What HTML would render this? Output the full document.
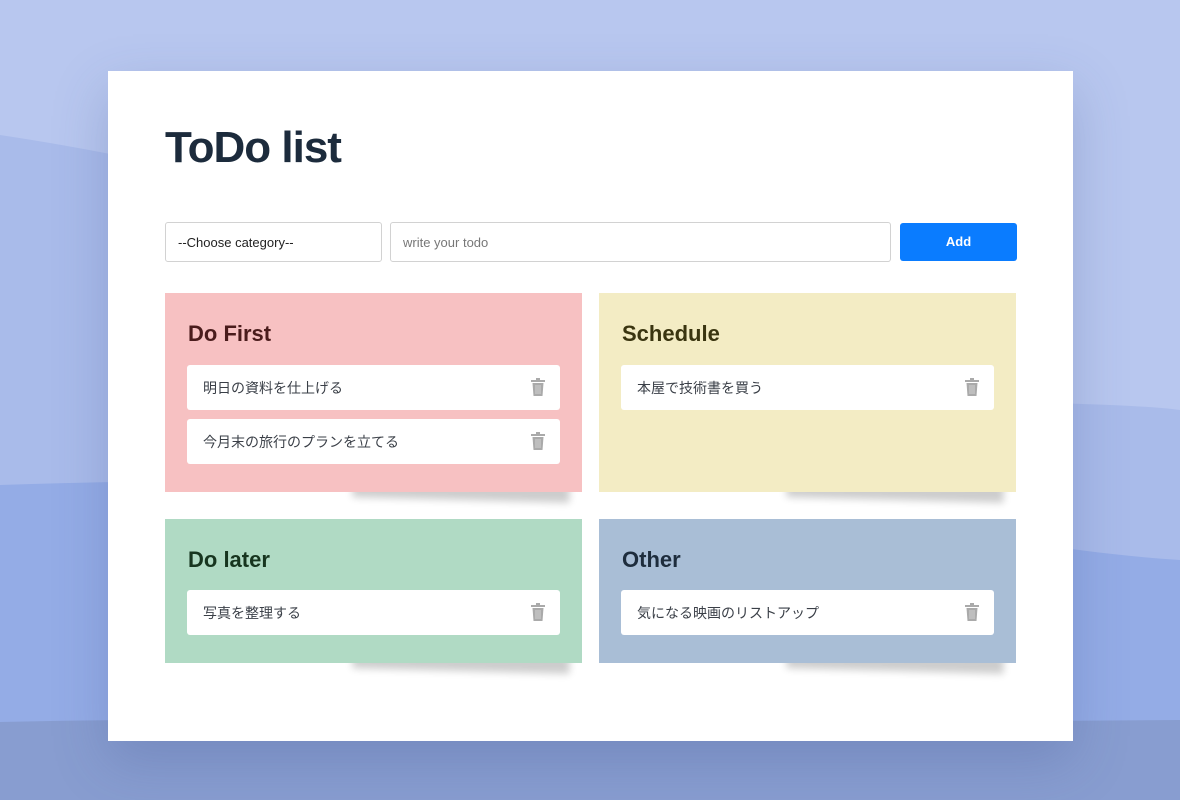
<!DOCTYPE html><html><head><style>
*{box-sizing:border-box;margin:0;padding:0}
body{width:1180px;height:800px;position:relative;overflow:hidden;font-family:"Liberation Sans","Noto Sans CJK JP",sans-serif;background:#b8c7ef}
.bg{position:absolute;left:0;top:0}
.card{position:absolute;left:108px;top:71px;width:965px;height:670px;background:#fff;box-shadow:0 20px 50px rgba(60,80,140,.25);z-index:0}
h1{position:absolute;left:57px;top:52px;font-size:44px;font-weight:bold;color:#1c2b3c;letter-spacing:-1px}
.sel,.inp{position:absolute;top:151px;height:40px;border:1px solid #d2d2d2;border-radius:3px;font-size:13px;padding:12px 12px;color:#222}
.sel{left:57px;width:217px}
.inp{left:282px;width:501px;color:#777}
.btn{position:absolute;left:792px;top:152px;width:117px;height:38px;background:#0a7cff;border-radius:3px;color:#fff;font-weight:bold;font-size:13px;text-align:center;line-height:38px}
.q{position:absolute;width:417px}
.q::after{content:"";position:absolute;z-index:-1;left:45%;right:12px;bottom:4px;height:20px;box-shadow:0 12px 8px rgba(0,0,0,.2);transform:rotate(1.5deg);background:#ccc}
.q h2{position:absolute;left:23px;top:28px;font-size:22px;font-weight:bold}
.it{position:absolute;left:22px;width:373px;height:45px;background:#fff;border-radius:3px;font-size:14px;color:#3a3f47;padding:13px 16px}
.it svg{position:absolute;right:15px;top:13px}
</style></head><body>
<svg class="bg" width="1180" height="800"><path d="M0 135 C300 180 700 300 900 380 C1000 410 1100 400 1180 410 L1180 800 L0 800Z" fill="#a9bbea"/><path d="M0 485 C300 475 600 480 900 520 C1000 540 1100 555 1180 560 L1180 800 L0 800Z" fill="#94ace6"/><path d="M0 722 C300 715 600 725 1180 720 L1180 800 L0 800Z" fill="#889dd0"/></svg>
<div class="card">
<h1>ToDo list</h1>
<div class="sel">--Choose category--</div>
<div class="inp">write your todo</div>
<div class="btn">Add</div>
<div class="q" style="left:57px;top:222px;height:199px;background:#f7c1c2"><h2 style="color:#4a1c1c">Do First</h2>
<div class="it" style="top:72px">明日の資料を仕上げる<svg width="14" height="18" viewBox="0 0 14 18"><rect x="0" y="2" width="14" height="2" fill="#aaa"/><rect x="5" y="0" width="4" height="3" fill="#aaa"/><path d="M1.5 5h11l-1 13h-9z" fill="#aaa"/><path d="M5 7v9M7 7v9M9 7v9" stroke="#ddd" stroke-width=".8"/></svg></div>
<div class="it" style="top:126px">今月末の旅行のプランを立てる<svg width="14" height="18" viewBox="0 0 14 18"><rect x="0" y="2" width="14" height="2" fill="#aaa"/><rect x="5" y="0" width="4" height="3" fill="#aaa"/><path d="M1.5 5h11l-1 13h-9z" fill="#aaa"/><path d="M5 7v9M7 7v9M9 7v9" stroke="#ddd" stroke-width=".8"/></svg></div></div>
<div class="q" style="left:491px;top:222px;height:199px;background:#f3ecc4"><h2 style="color:#3a3510">Schedule</h2>
<div class="it" style="top:72px">本屋で技術書を買う<svg width="14" height="18" viewBox="0 0 14 18"><rect x="0" y="2" width="14" height="2" fill="#aaa"/><rect x="5" y="0" width="4" height="3" fill="#aaa"/><path d="M1.5 5h11l-1 13h-9z" fill="#aaa"/><path d="M5 7v9M7 7v9M9 7v9" stroke="#ddd" stroke-width=".8"/></svg></div></div>
<div class="q" style="left:57px;top:448px;height:144px;background:#b0dac4"><h2 style="color:#17351f">Do later</h2>
<div class="it" style="top:71px">写真を整理する<svg width="14" height="18" viewBox="0 0 14 18"><rect x="0" y="2" width="14" height="2" fill="#aaa"/><rect x="5" y="0" width="4" height="3" fill="#aaa"/><path d="M1.5 5h11l-1 13h-9z" fill="#aaa"/><path d="M5 7v9M7 7v9M9 7v9" stroke="#ddd" stroke-width=".8"/></svg></div></div>
<div class="q" style="left:491px;top:448px;height:144px;background:#a9bed6"><h2 style="color:#1e2d3d">Other</h2>
<div class="it" style="top:71px">気になる映画のリストアップ<svg width="14" height="18" viewBox="0 0 14 18"><rect x="0" y="2" width="14" height="2" fill="#aaa"/><rect x="5" y="0" width="4" height="3" fill="#aaa"/><path d="M1.5 5h11l-1 13h-9z" fill="#aaa"/><path d="M5 7v9M7 7v9M9 7v9" stroke="#ddd" stroke-width=".8"/></svg></div></div>
</div>
</body></html>
